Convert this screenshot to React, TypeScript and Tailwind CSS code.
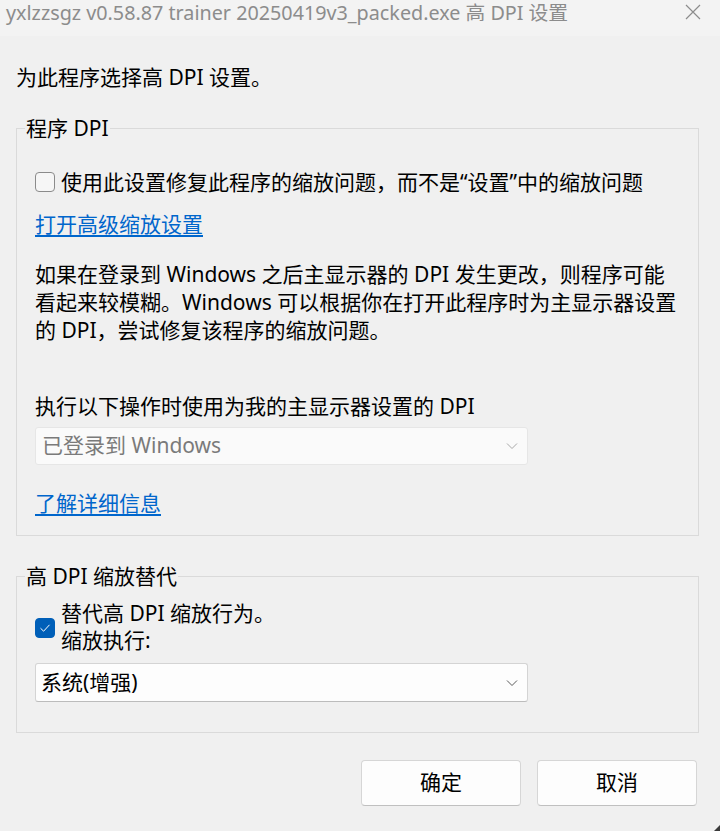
import { useState } from 'react';

const font = "font-['Noto_Sans','Noto_Sans_CJK_SC',sans-serif]";

function Chevron({ muted }: { muted?: boolean }) {
  return (
    <svg width="12" height="8" viewBox="0 0 12 8" className="shrink-0">
      <path
        d="M1 1.5 L6 6.5 L11 1.5"
        fill="none"
        stroke={muted ? '#a8a8a8' : '#5a5a5a'}
        strokeWidth="1"
      />
    </svg>
  );
}

function Checkbox({ checked, onChange, className = '' }: { checked: boolean; onChange: () => void; className?: string }) {
  return (
    <button
      type="button"
      onClick={onChange}
      className={
        checked
          ? `w-[20px] h-[20px] rounded-[4px] bg-[#005fb8] border border-[#005fb8] flex items-center justify-center shrink-0 ${className}`
          : `w-[20px] h-[20px] rounded-[4px] bg-[#f6f6f6] border border-[#8b8b8b] shrink-0 ${className}`
      }
    >
      {checked && (
        <svg width="12" height="10" viewBox="0 0 12 10">
          <path d="M1.5 5.2 L4.6 8.2 L10.5 1.8" fill="none" stroke="#ffffff" strokeWidth="1" />
        </svg>
      )}
    </button>
  );
}

function GroupBox({ title, children, className }: { title: string; children: React.ReactNode; className: string }) {
  return (
    <fieldset className={`ml-[16px] mr-[21px] min-w-0 border border-[#dadada] ${className}`}>
      <legend className="ml-[8px] px-[1px] text-[21px] leading-[28px] text-black">{title}</legend>
      {children}
    </fieldset>
  );
}

export default function App() {
  const [fixScaling, setFixScaling] = useState(false);
  const [override, setOverride] = useState(true);

  return (
    <div className={`relative w-[720px] h-[831px] bg-[#f0f0f0] flex flex-col ${font}`}>
      <div className="h-[36px] bg-[#f3f3f3] flex items-start justify-between shrink-0">
        <div className="pl-[6px] text-[19.75px] leading-[26px] text-[#8c8c8c] whitespace-nowrap">
          yxlzzsgz v0.58.87 trainer 20250419v3_packed.exe 高 DPI 设置
        </div>
        <svg width="16" height="16" viewBox="0 0 16 16" className="mt-[4px] mr-[19px]">
          <path d="M1 1 L15 15 M15 1 L1 15" stroke="#8c8c8c" strokeWidth="1.2" />
        </svg>
      </div>

      <div className="pl-[16px] pt-[27px] text-[21px] leading-[28px] text-black">
        为此程序选择高 DPI 设置。
      </div>

      <GroupBox title="程序 DPI" className="mt-[23px]">
        <div className="px-[18px] pb-[18px]">
          <div className="pt-[26px] flex items-center gap-[6px] text-[21px] leading-[28px] text-black whitespace-nowrap">
            <Checkbox checked={fixScaling} onChange={() => setFixScaling(!fixScaling)} />
            <span>使用此设置修复此程序的缩放问题，而不是“设置”中的缩放问题</span>
          </div>
          <a href="#" className="mt-[14px] block w-fit text-[21px] leading-[28px] text-[#0066cc] underline underline-offset-[3px]">
            打开高级缩放设置
          </a>
          <p className="mt-[22px] text-[21px] leading-[28px] text-black whitespace-nowrap">
            如果在登录到 Windows 之后主显示器的 DPI 发生更改，则程序可能
            <br />
            <span>看起来较模糊</span>
            <span>。</span>
            <span>Windows</span>
            <span> 可以根据你在打开此程序</span>
            <span>时为主显示器设置</span>
            <br />
            的 DPI，尝试修复该程序的缩放问题。
          </p>
          <div className="mt-[48px] text-[21px] leading-[28px] text-black">执行以下操作时使用为我的主显示器设置的 DPI</div>
          <div className="mt-[7px] w-[493px] h-[38px] bg-[#fafafa] border border-[#e6e6e6] rounded-[3px] flex items-center justify-between pl-[6px] pr-[9px]">
            <span className="text-[21px] text-[#7a7a7a]">已登录到 Windows</span>
            <Chevron muted />
          </div>
          <a href="#" className="mt-[24px] block w-fit text-[21px] leading-[28px] text-[#0066cc] underline underline-offset-[3px]">
            了解详细信息
          </a>
        </div>
      </GroupBox>

      <GroupBox title="高 DPI 缩放替代" className="mt-[26px]">
        <div className="px-[18px] pb-[30px]">
          <div className="pt-[10px] flex items-start gap-[6px] text-[21px] leading-[27px] text-black">
            <Checkbox checked={override} onChange={() => setOverride(!override)} className="mt-[18px]" />
            <div>
              <div>替代高 DPI 缩放行为。</div>
              <div>缩放执行:</div>
            </div>
          </div>
          <div className="mt-[9px] w-[493px] h-[39px] bg-[#fdfdfd] border border-[#d4d4d4] border-b-[#bcbcbc] rounded-[3px] flex items-center justify-between pl-[5px] pr-[9px]">
            <span className="text-[21px] text-black">系统(增强)</span>
            <Chevron />
          </div>
        </div>
      </GroupBox>

      <div className="mt-[27px] pr-[23px] flex justify-end gap-[16px]">
        <button className="w-[160px] h-[46px] bg-[#fdfdfd] border border-[#d6d6d6] border-b-[#c0c0c0] rounded-[4px] text-[21px] text-black">
          确定
        </button>
        <button className="w-[160px] h-[46px] bg-[#fdfdfd] border border-[#d6d6d6] border-b-[#c0c0c0] rounded-[4px] text-[21px] text-black">
          取消
        </button>
      </div>

      <svg width="6" height="6" viewBox="0 0 6 6" className="absolute right-0 bottom-0">
        <path d="M6 0 L6 6 L0 6 Z" fill="#3a3a3a" />
      </svg>
    </div>
  );
}
